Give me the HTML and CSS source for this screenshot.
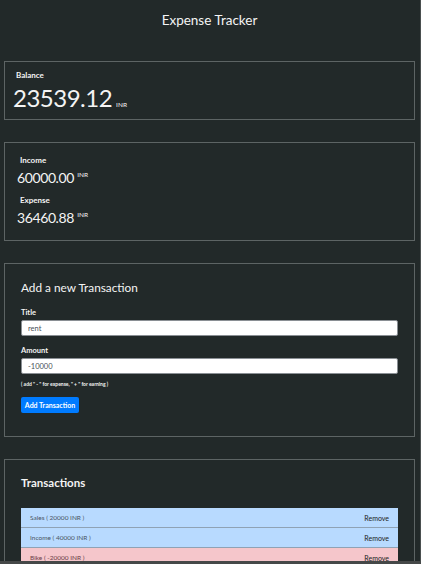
FILE: index.html
```html
<!DOCTYPE html>
<html lang="en">
<head>
<meta charset="utf-8">
<title>Expense Tracker</title>
<link rel="stylesheet" href="styles.css">
</head>
<body>
<div class="page">
  <header class="header"><h1 class="title">Expense Tracker</h1></header>

  <section class="card card-balance">
    <div class="label">Balance</div>
    <div class="big-value">23539.12<span class="unit-big">INR</span></div>
  </section>

  <section class="card card-summary">
    <div class="label">Income</div>
    <div class="mid-value">60000.00 <sup class="unit-sup">INR</sup></div>
    <div class="label label-gap">Expense</div>
    <div class="mid-value">36460.88 <sup class="unit-sup">INR</sup></div>
  </section>

  <section class="card card-form">
    <h2 class="card-heading">Add a new Transaction</h2>
    <div class="field-label">Title</div>
    <input class="input" type="text" value="rent">
    <div class="field-label field-gap">Amount</div>
    <input class="input" type="text" value="-10000">
    <div class="hint">( add " - " for expense, " + " for earning )</div>
    <button class="btn">Add Transaction</button>
  </section>

  <section class="card card-list">
    <h2 class="card-heading list-heading">Transactions</h2>
    <ul class="tx-list">
      <li class="tx tx-income"><span>Sales ( 20000 INR )</span><span class="remove">Remove</span></li>
      <li class="tx tx-income"><span>Income ( 40000 INR )</span><span class="remove">Remove</span></li>
      <li class="tx tx-expense"><span>Bike ( -20000 INR )</span><span class="remove">Remove</span></li>
    </ul>
  </section>
</div>
<div class="frame"></div>
</body>
</html>
```
FILE: styles.css
```css
html, body {
  margin: 0;
  padding: 0;
  background: #222929;
  color: #f4f4f4;
  font-family: Lato, "Open Sans", sans-serif;
  overflow: hidden;
}
.page {
  padding: 0 6px 0 4px;
  height: 564px;
  overflow: hidden;
}
.header {
  padding-top: 10px;
  text-align: center;
}
.title {
  margin: 0;
  font-size: 13.5px;
  line-height: 20px;
  font-weight: 400;
}
.card {
  border: 1px solid #5d6464;
  margin-top: 31px;
}
.card + .card {
  margin-top: 22px;
}
.card-balance {
  height: 49px;
  padding: 8px 8px 0;
}
.label {
  font-size: 8px;
  line-height: 11px;
  font-weight: 700;
  margin-left: 3px;
}
.big-value {
  font-size: 24px;
  line-height: 26px;
  letter-spacing: -0.5px;
  margin-top: 4px;
}
.unit-big {
  font-size: 6.5px;
  letter-spacing: 0;
  margin-left: 4px;
}
.card-summary {
  padding: 12px 15px 14px 12px;
}
.mid-value {
  font-size: 14px;
  line-height: 16px;
  letter-spacing: -0.4px;
  margin-top: 1px;
}
.unit-sup {
  font-size: 6.5px;
  letter-spacing: 0;
  vertical-align: 6px;
}
.label-gap {
  margin-top: 9px;
}
.card-form {
  padding: 16px 16px 23px 16px;
}
.card-heading {
  margin: 0;
  font-size: 11.8px;
  line-height: 16px;
  font-weight: 400;
}
.field-label {
  font-size: 7.5px;
  line-height: 10px;
  font-weight: 700;
  margin-top: 12px;
  margin-bottom: 2px;
}
.field-gap {
  margin-top: 10px;
}
.input {
  display: block;
  box-sizing: border-box;
  width: 100%;
  height: 16px;
  margin: 0;
  padding: 0 6px;
  border: 1px solid #8a8f94;
  border-radius: 2px;
  background: #fff;
  color: #495057;
  font-family: Lato, sans-serif;
  font-size: 7.5px;
  outline: none;
}
.hint {
  font-size: 5px;
  line-height: 8px;
  margin-top: 6px;
  font-weight: 700;
}
.btn {
  display: block;
  margin-top: 9px;
  height: 16px;
  width: 58px;
  padding: 0;
  border: none;
  border-radius: 2px;
  background: #007bff;
  color: #fff;
  font-family: Lato, sans-serif;
  font-size: 7px;
  font-weight: 700;
}
.card-list {
  padding: 15px 16px 30px 16px;
}
.list-heading {
  font-size: 11.5px;
  font-weight: 700;
}
.tx-list {
  list-style: none;
  margin: 17px 0 0;
  padding: 0;
}
.tx {
  display: flex;
  justify-content: space-between;
  align-items: center;
  height: 20px;
  box-sizing: border-box;
  padding: 0 9px 0 9px;
  font-size: 6.5px;
  border-bottom: 1px solid #8fa2b5;
}
.tx-income {
  background: #b8daff;
  color: #4a5563;
}
.tx-expense {
  background: #f5c6cb;
  color: #6b4048;
}
.remove {
  color: #222;
  font-size: 7px;
}
.frame {
  position: fixed;
  inset: 0;
  pointer-events: none;
  border-right: 1px solid #4a4f4f;
  border-bottom: 3px solid #454848;
}
```
